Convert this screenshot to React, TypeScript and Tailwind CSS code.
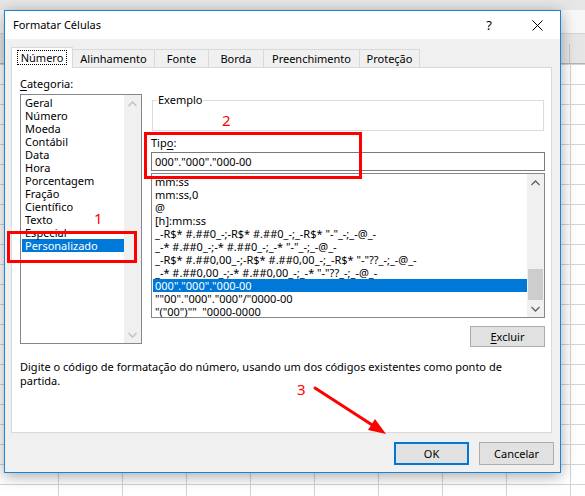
import React from "react";

const cats = ["Geral", "Número", "Moeda", "Contábil", "Data", "Hora", "Porcentagem", "Fração", "Científico", "Texto", "Especial", "Personalizado"];
const codes = [
  "mm:ss",
  "mm:ss,0",
  "@",
  "[h]:mm:ss",
  '_-R$* #.##0_-;-R$* #.##0_-;_-R$* "-"_-;_-@_-',
  '_-* #.##0_-;-* #.##0_-;_-* "-"_-;_-@_-',
  '_-R$* #.##0,00_-;-R$* #.##0,00_-;_-R$* "-"??_-;_-@_-',
  '_-* #.##0,00_-;-* #.##0,00_-;_-* "-"??_-;_-@_-',
  '000"."000"."000-00',
  '""00"."000"."000"/"0000-00',
  '"("00")""  "0000-0000',
];

function Chevron({ up, color }: { up?: boolean; color: string }) {
  return (
    <svg width="9" height="6" viewBox="0 0 9 6">
      <polyline
        points={up ? "0.5,5 4.5,1 8.5,5" : "0.5,1 4.5,5 8.5,1"}
        fill="none"
        stroke={color}
        strokeWidth="1.3"
      />
    </svg>
  );
}

const tabs = [
  { label: "Número", w: "w-[62px]" },
  { label: "Alinhamento", w: "w-[82px]" },
  { label: "Fonte", w: "w-[54px]" },
  { label: "Borda", w: "w-[55px]" },
  { label: "Preenchimento", w: "w-[96px]" },
  { label: "Proteção", w: "w-[60px]" },
];

export default function App() {
  return (
    <div className="relative w-[585px] h-[496px] overflow-hidden bg-white bg-[linear-gradient(to_right,#d4d4d4_1px,transparent_1px),linear-gradient(to_bottom,#d4d4d4_1px,transparent_1px)] bg-[size:64px_20px] bg-[position:58px_4px] font-['Noto_Sans',sans-serif] text-[11px] text-black">
      {/* spreadsheet top chrome */}
      <div className="flex flex-col h-[64px]">
        <div className="h-[10px] bg-[#e6e6e6]" />
        <div className="h-[24px] bg-[#f7f7f7] border-b border-[#d4d4d4]" />
        <div className="h-[30px] bg-[#e6e6e6] border-b border-[#b4b4b4] flex">
          <div className="w-[570px] border-r border-[#c8c8c8] mt-[10px]" />
        </div>
      </div>

      {/* dialog window */}
      <div className="absolute left-[4px] top-[10px] w-[557px] h-[463px] border border-[#1883d7] bg-[#f0f0f0] shadow-[0_3px_14px_rgba(0,0,0,0.35)] flex flex-col">
        {/* title bar */}
        <div className="h-[28px] bg-white flex items-center pl-[8px] shrink-0">
          <span className="text-[11px] leading-[14px]">Formatar Células</span>
          <span className="ml-auto text-[13px] leading-[14px] mr-[40px]">?</span>
          <svg width="11" height="11" viewBox="0 0 11 11" className="mr-[17px]">
            <path d="M0.5 0.5 L10.5 10.5 M10.5 0.5 L0.5 10.5" stroke="#000" strokeWidth="1" />
          </svg>
        </div>

        {/* body */}
        <div className="flex-1 flex flex-col pl-[6px] pr-[8px] pt-[8px]">
          {/* tab strip */}
          <div className="flex items-end h-[20px] shrink-0">
            {tabs.map((t, i) =>
              i === 0 ? (
                <div
                  key={t.label}
                  className={`${t.w} relative z-10 h-[21px] -mb-px bg-white border-l border-t border-r border-[#d9d9d9] flex items-start justify-center pt-[2px]`}
                >
                  <span className="border border-dotted border-black px-[3px] leading-[13px]">{t.label}</span>
                </div>
              ) : (
                <div
                  key={t.label}
                  className={`${t.w} h-[18px] bg-[#f0f0f0] border-t border-r border-[#d9d9d9] flex items-center justify-center leading-[14px]`}
                >
                  {t.label}
                </div>
              )
            )}
          </div>

          {/* tab panel */}
          <div className="w-[541px] h-[366px] bg-white border border-[#d9d9d9] flex flex-col shrink-0">
            <div className="flex pl-[8px]">
              {/* left column */}
              <div className="flex flex-col w-[122px] pt-[9px]">
                <div className="leading-[14px]">
                  <span className="underline underline-offset-2">C</span>ategoria:
                </div>
                <div className="mt-[3px] h-[250px] border border-[#828790] bg-white flex">
                  <div className="flex-1 pt-px">
                    {cats.map((c) => (
                      <div
                        key={c}
                        className={`ml-px h-[13px] leading-[13px] pl-[3px] whitespace-nowrap ${
                          c === "Personalizado" ? "bg-[#0078d7] text-white" : ""
                        }`}
                      >
                        {c}
                      </div>
                    ))}
                  </div>
                  <div className="w-[17px] bg-[#f0f0f0] flex flex-col justify-between">
                    <div className="h-[17px] flex items-center justify-center">
                      <Chevron up color="#bfbfbf" />
                    </div>
                    <div className="h-[17px] flex items-center justify-center">
                      <Chevron color="#bfbfbf" />
                    </div>
                  </div>
                </div>
              </div>

              {/* right column */}
              <div className="flex flex-col w-[394px] ml-[9px]">
                <div className="relative mt-[32px] ml-px w-[392px] h-[31px] border border-[#dcdcdc]">
                  <span className="absolute left-[4px] -top-[8px] bg-white px-px leading-[14px]">Exemplo</span>
                </div>
                <div className="mt-[5px] leading-[14px]">
                  Tip<span className="underline underline-offset-2">o</span>:
                </div>
                <div className="mt-[2px] h-[19px] border border-[#7a7a7a] bg-white flex items-center pl-[3px] leading-[14px] whitespace-nowrap">
                  000"."000"."000-00
                </div>
                <div className="mt-[2px] h-[145px] border border-[#828790] bg-white flex">
                  <div className="flex-1 pt-px overflow-hidden">
                    {codes.map((c, i) => (
                      <div
                        key={c}
                        className={`ml-px h-[13px] leading-[13px] pl-[2px] whitespace-pre ${
                          i === 8 ? "bg-[#0078d7] text-white" : ""
                        }`}
                      >
                        {c}
                      </div>
                    ))}
                  </div>
                  <div className="w-[17px] bg-[#f0f0f0] flex flex-col">
                    <div className="h-[17px] flex items-center justify-center shrink-0">
                      <Chevron up color="#606060" />
                    </div>
                    <div className="flex-1">
                      <div className="mx-px mt-[78px] h-[31px] bg-[#cdcdcd]" />
                    </div>
                    <div className="h-[17px] flex items-center justify-center shrink-0">
                      <Chevron color="#606060" />
                    </div>
                  </div>
                </div>
                <div className="mt-[8px] flex justify-end">
                  <div className="w-[75px] h-[21px] bg-[#e1e1e1] border border-[#adadad] flex items-center justify-center leading-[14px]">
                    <span>
                      <span className="underline underline-offset-2">E</span>xcluir
                    </span>
                  </div>
                </div>
              </div>
            </div>

            <div className="mt-[13px] pl-[8px] leading-[14px] whitespace-nowrap">
              <div>Digite o código de formatação do número, usando um dos códigos existentes como ponto de</div>
              <div>partida.</div>
            </div>
          </div>

          {/* buttons */}
          <div className="mt-[9px] flex justify-end gap-[10px] -mr-[2px]">
            <div className="w-[75px] h-[23px] bg-[#e1e1e1] border-2 border-[#0078d7] flex items-center justify-center leading-[14px]">
              OK
            </div>
            <div className="w-[75px] h-[23px] bg-[#e1e1e1] border border-[#adadad] flex items-center justify-center leading-[14px]">
              Cancelar
            </div>
          </div>
        </div>
      </div>

      {/* red annotations */}
      <div className="absolute left-[7px] top-[231px] w-[130px] h-[32px] border-[3px] border-[#ff0000]" />
      <div className="absolute left-[144px] top-[132px] w-[218px] h-[47px] border-[3px] border-[#ff0000]" />
      <div className="absolute left-[94px] top-[209px] text-[15px] leading-[18px] text-[#ff0000]">1</div>
      <div className="absolute left-[222px] top-[111px] text-[15px] leading-[18px] text-[#ff0000]">2</div>
      <div className="absolute left-[297px] top-[380px] text-[15px] leading-[18px] text-[#ff0000]">3</div>
      <svg className="absolute left-0 top-0 pointer-events-none" width="585" height="496" viewBox="0 0 585 496">
        <line x1="315" y1="388" x2="373" y2="425.5" stroke="#ff0000" strokeWidth="3" strokeLinecap="round" />
        <polygon points="386,434 368,430 375,419" fill="#ff0000" />
      </svg>
    </div>
  );
}
